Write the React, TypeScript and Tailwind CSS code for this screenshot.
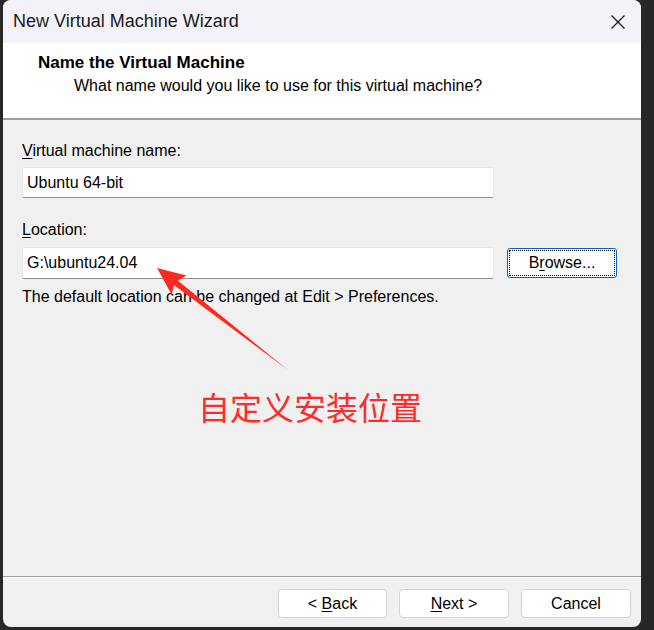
import React from "react";

const font = { fontFamily: '"Liberation Sans", Arial, sans-serif' };

function U({ children }: { children: React.ReactNode }) {
  return <span className="underline underline-offset-2">{children}</span>;
}

export default function App() {
  return (
    <div className="relative w-[654px] h-[630px] bg-[#272727] overflow-hidden" style={font}>
      <div className="ml-[3px] w-[638px] h-[627px] rounded-[8px] overflow-hidden flex flex-col bg-[#f0f0f0] text-[16px] text-black">
        {/* Title bar */}
        <div className="h-[43px] bg-[#f3f2f8] flex items-center justify-between pl-[10px] pr-[16px]">
          <span className="text-[18px] text-[#1a1a1a]">New Virtual Machine Wizard</span>
          <svg width="16" height="16" viewBox="0 0 16 16" className="mr-[-1px]">
            <path d="M1.5 1.5 L14.5 14.5 M14.5 1.5 L1.5 14.5" stroke="#1a1a1a" strokeWidth="1.3" />
          </svg>
        </div>
        {/* Header */}
        <div className="h-[75px] bg-white pl-[35px] pt-[9px]">
          <div className="font-bold text-[17px] leading-[21px]">Name the Virtual Machine</div>
          <div className="pl-[36px] leading-[21px] mt-[2px]">What name would you like to use for this virtual machine?</div>
        </div>
        <div className="h-[2px] bg-[#a0a0a0]" />
        {/* Body */}
        <div className="flex-1 pl-[19px] pr-[23px] pt-[21px]">
          <div className="leading-[20px]">
            <U>V</U>irtual machine name:
          </div>
          <div className="mt-[6px] w-[472px] h-[31px] bg-white border border-[#e6e6e6] border-b-[#8e8e8e] rounded-[2px] flex items-center pl-[4px]">
            Ubuntu 64-bit
          </div>
          <div className="mt-[22px] leading-[20px]">
            <U>L</U>ocation:
          </div>
          <div className="mt-[7px] flex items-center">
            <div className="w-[472px] h-[32px] bg-white border border-[#e6e6e6] border-b-[#8e8e8e] rounded-[2px] flex items-center pl-[4px]">
              G:\ubuntu24.04
            </div>
            <div className="ml-[13px] w-[110px] h-[30px] rounded-[3px] border border-[#0067c0] bg-white p-[1px]">
              <div className="w-full h-full border border-dotted border-black flex items-center justify-center">
                <span>
                  B<U>r</U>owse...
                </span>
              </div>
            </div>
          </div>
          <div className="mt-[8px] leading-[20px]">The default location can be changed at Edit &gt; Preferences.</div>
        </div>
        {/* Footer */}
        <div className="h-[1px] bg-[#a0a0a0]" />
        <div className="h-[1px] bg-white" />
        <div className="h-[49px] flex justify-end items-start pt-[11px] pr-[10px] gap-[12px]">
          <button className="w-[109px] h-[29px] bg-white border border-[#d4d4d4] rounded-[4px] flex items-center justify-center text-[16px]" style={font}>
            <span>
              &lt; <U>B</U>ack
            </span>
          </button>
          <button className="w-[110px] h-[29px] bg-white border border-[#d4d4d4] rounded-[4px] flex items-center justify-center text-[16px]" style={font}>
            <span>
              <U>N</U>ext &gt;
            </span>
          </button>
          <button className="w-[110px] h-[29px] bg-white border border-[#d4d4d4] rounded-[4px] flex items-center justify-center text-[16px]" style={font}>
            <span>Cancel</span>
          </button>
        </div>
      </div>
      {/* Annotation */}
      <svg className="absolute left-0 top-0 pointer-events-none" width="654" height="630">
        <polygon
          points="157,268 186.5,275.5 177.7,280.6 288,370 174.2,285.2 171.6,294.4"
          fill="#ff2a1f"
        />
      </svg>
      <div
        className="absolute left-[198px] top-[387px] text-[32px] leading-[38px] text-[#ff2a2a] whitespace-nowrap"
        style={{ fontFamily: '"Noto Sans CJK SC", sans-serif' }}
      >
        自定义安装位置
      </div>
    </div>
  );
}
